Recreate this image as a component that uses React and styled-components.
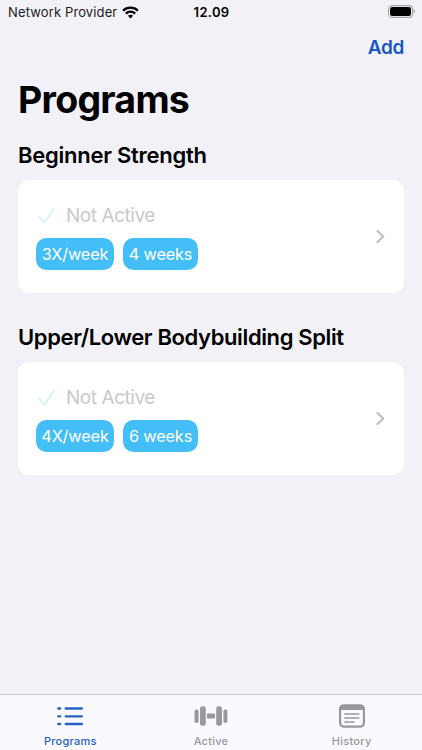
import React from "react";
import styled, { createGlobalStyle } from "styled-components";

const Global = createGlobalStyle`
  * { box-sizing: border-box; }
  body { margin: 0; background: #f2f1f8; font-family: Inter, "Liberation Sans", sans-serif; color: #000; }
  h1, h2, p { margin: 0; }
  svg { display: block; flex: none; }
`;

const Screen = styled.div`
  width: 422px;
  height: 750px;
  display: flex;
  flex-direction: column;
  overflow: hidden;
  white-space: nowrap;
`;

const StatusBar = styled.header`
  height: 24px;
  flex: none;
  display: grid;
  grid-template-columns: 1fr auto 1fr;
  align-items: center;
  padding: 0 7px 0 8px;
  font-size: 13px;
  line-height: 24px;
`;

const Carrier = styled.div`
  display: flex;
  align-items: center;
  gap: 5px;
  letter-spacing: 0.13px;
  color: #1c1c1e;
`;

const Clock = styled.div`
  font-weight: 600;
  letter-spacing: 0.3px;
`;

const BatterySlot = styled.div`
  justify-self: end;
  height: 15px;
`;

const NavBar = styled.nav`
  height: 48px;
  flex: none;
  display: flex;
  justify-content: flex-end;
  align-items: center;
  padding: 0 18px;
`;

const AddButton = styled.button`
  border: 0;
  padding: 0;
  background: none;
  font: 600 19px/24px Inter, sans-serif;
  letter-spacing: -0.3px;
  color: #1758c0;
`;

const Title = styled.h1`
  padding: 0 18px;
  height: 56px;
  font-size: 37.5px;
  line-height: 56px;
  font-weight: 700;
  letter-spacing: -0.75px;
`;

const Content = styled.main`
  flex: 1;
  display: flex;
  flex-direction: column;
  gap: 29px;
  padding: 12px 18px 0;
`;

const Section = styled.section`
  display: flex;
  flex-direction: column;
  gap: 9px;
`;

const Heading = styled.h2`
  height: 31px;
  font-size: 22px;
  line-height: 31px;
  font-weight: 600;
  letter-spacing: ${(p) => p.$tracking}px;
`;

const Card = styled.article`
  height: 113px;
  display: flex;
  align-items: center;
  justify-content: space-between;
  padding: 0 18px;
  border-radius: 12px;
  background: #fff;
`;

const Details = styled.div`
  display: flex;
  flex-direction: column;
  gap: 10px;
`;

const Status = styled.div`
  display: flex;
  align-items: center;
  gap: 9px;
  height: 25px;
  font-size: 19px;
  line-height: 26px;
  letter-spacing: -0.45px;
  color: #c9c9ca;
`;

const Pills = styled.div`
  display: flex;
  gap: 9px;
`;

const Pill = styled.span`
  width: ${(p) => p.$width}px;
  height: 32px;
  border-radius: 10.5px;
  background: #43bef7;
  color: #fff;
  font-size: 16.3px;
  letter-spacing: -0.15px;
  line-height: 33px;
  text-align: center;
`;

const TabBar = styled.footer`
  height: 56px;
  flex: none;
  display: grid;
  grid-template-columns: repeat(3, 1fr);
  border-top: 1px solid #c9c8ce;
  background: #faf9fe;
`;

const Tab = styled.div`
  display: flex;
  flex-direction: column;
  align-items: center;
  gap: 2px;
  padding-top: 6px;
  font-size: 11px;
  line-height: 14px;
  font-weight: 500;
  letter-spacing: 0.25px;
  color: ${(p) => (p.$active ? "#2462c4" : "#98989d")};
`;

function WifiIcon() {
  return (
    <svg width="17" height="13" viewBox="0 0 17 13" fill="none" stroke="#000" strokeWidth="2.2">
      <path d="M1.1 4.7C5.2.7 11.8.7 15.9 4.7" />
      <path d="M3.8 7.6C6.4 5 10.6 5 13.2 7.6" />
      <path d="M5.9 9.7C7.3 8.3 9.7 8.3 11.1 9.7L8.5 12.4Z" fill="#000" stroke="none" />
    </svg>
  );
}

function BatteryIcon() {
  return (
    <svg width="27" height="13" viewBox="0 0 27 13">
      <rect x=".6" y=".6" width="23.8" height="11.8" rx="3.5" fill="none" stroke="#a3a2a8" strokeWidth="1.1" />
      <rect x="2" y="2" width="21" height="9" rx="2.2" fill="#000" />
      <path d="M25.5 4.5Q27 5 27 6.5T25.5 8.5Z" fill="#a3a2a8" />
    </svg>
  );
}

function CheckIcon() {
  return (
    <svg width="21" height="20" viewBox="0 0 21 20" fill="none" stroke="#c6f0f5" strokeWidth="1.3" strokeLinecap="round" strokeLinejoin="round">
      <path d="M3 10.2L8.6 16.9L17.8 2.7" />
    </svg>
  );
}

function Chevron() {
  return (
    <svg width="10" height="14" viewBox="0 0 10 14" fill="none" stroke="#bdbdbf" strokeWidth="2.1" strokeLinecap="round" strokeLinejoin="round">
      <path d="M1.5 1.1L7.2 6.6L1.5 12.1" />
    </svg>
  );
}

function ListIcon() {
  return (
    <svg width="34" height="31" viewBox="0 0 34 31" fill="none" stroke="#2462c4" strokeWidth="2.3" strokeLinecap="round">
      <path d="M5.2 7.5h2M12.7 7.5h16.2M5.2 15.3h2M12.7 15.3h16.2M5.2 23h2M12.7 23h16.2" />
    </svg>
  );
}

function DumbbellIcon() {
  return (
    <svg width="34" height="31" viewBox="0 0 34 31" fill="#98989d">
      <rect x=".6" y="8.5" width="4" height="13.5" rx="1.8" />
      <rect x="6" y="5.3" width="5.8" height="19.5" rx="2.4" />
      <rect x="13" y="12.6" width="8" height="5" rx=".8" />
      <rect x="22.2" y="5.3" width="5.8" height="19.5" rx="2.4" />
      <rect x="29.4" y="8.5" width="4" height="13.5" rx="1.8" />
    </svg>
  );
}

function HistoryIcon() {
  return (
    <svg width="34" height="31" viewBox="0 0 34 31" fill="none" stroke="#98989d">
      <rect x="5.1" y="4.3" width="23.8" height="21.3" rx="3.5" strokeWidth="2.2" />
      <path d="M5 9V7Q5 4 8 4h18q3 0 3 3v2Z" fill="#98989d" stroke="none" />
      <path d="M9.8 13h14.1M9.8 17h14.1M9.8 21h9.3" strokeWidth="1.6" strokeLinecap="round" />
    </svg>
  );
}

const programs = [
  { name: "Beginner Strength", tracking: -0.26, frequency: "3X/week", length: "4 weeks" },
  { name: "Upper/Lower Bodybuilding Split", tracking: -0.38, frequency: "4X/week", length: "6 weeks" },
];

export default function App() {
  return (
    <Screen>
      <Global />
      <StatusBar>
        <Carrier>Network Provider <WifiIcon /></Carrier>
        <Clock>12.09</Clock>
        <BatterySlot><BatteryIcon /></BatterySlot>
      </StatusBar>
      <NavBar><AddButton>Add</AddButton></NavBar>
      <Title>Programs</Title>
      <Content>
        {programs.map((p) => (
          <Section key={p.name}>
            <Heading $tracking={p.tracking}>{p.name}</Heading>
            <Card>
              <Details>
                <Status><CheckIcon />Not Active</Status>
                <Pills>
                  <Pill $width={78}>{p.frequency}</Pill>
                  <Pill $width={75}>{p.length}</Pill>
                </Pills>
              </Details>
              <Chevron />
            </Card>
          </Section>
        ))}
      </Content>
      <TabBar>
        <Tab $active><ListIcon />Programs</Tab>
        <Tab><DumbbellIcon />Active</Tab>
        <Tab><HistoryIcon />History</Tab>
      </TabBar>
    </Screen>
  );
}
